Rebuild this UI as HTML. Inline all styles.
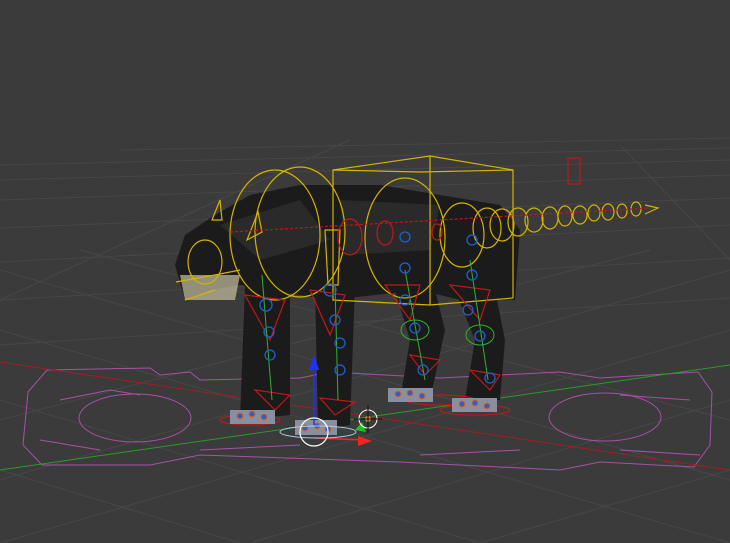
<!DOCTYPE html><html><head><style>html,body{margin:0;padding:0;background:#3b3b3b;width:730px;height:543px;overflow:hidden}</style></head><body>
<svg width="730" height="543" viewBox="0 0 730 543" xmlns="http://www.w3.org/2000/svg">
<rect width="730" height="543" fill="#3b3b3b"/>
<g stroke="#474747" stroke-width="1" fill="none">
<path d="M0 200 L730 175"/><path d="M0 228 L730 198"/><path d="M0 262 L730 225"/><path d="M0 300 L730 258"/><path d="M0 345 L730 298"/>
<path d="M0 180 L730 160"/><path d="M0 165 L730 148"/><path d="M120 150 L730 138"/>
<path d="M0 330 L730 543"/><path d="M0 400 L480 543"/><path d="M0 470 L240 543"/><path d="M0 270 L730 480"/><path d="M80 250 L730 420"/>
<path d="M730 330 L0 543"/><path d="M730 400 L250 543"/><path d="M730 470 L480 543"/><path d="M730 270 L0 480"/><path d="M650 250 L0 420"/>
<path d="M0 300 L350 140"/><path d="M620 145 L730 260"/>
</g>
<!-- pink ground -->
<g stroke="#a850a8" stroke-width="1" fill="none">
<path d="M47 370 L150 368 L160 375 L190 372 L200 380 L300 378 L330 372 L440 378 L560 372 L600 378 L698 372 L712 392 L710 445 L694 467 L600 462 L560 470 L400 462 L200 455 L150 465 L42 465 L23 445 L28 392 Z"/>
<path d="M60 400 L110 390 L140 395 M620 395 L690 400 M40 440 L100 450 M620 450 L700 455 M200 450 L300 445 M420 455 L520 450"/>
<ellipse cx="135" cy="418" rx="56" ry="24"/><ellipse cx="605" cy="417" rx="56" ry="24"/>
</g>
<path d="M0 470 L730 365" stroke="#2a9a2a" stroke-width="1"/>
<path d="M0 362 L730 470" stroke="#a02020" stroke-width="1" fill="none"/>
<!-- body -->
<g fill="#1b1b1b">
<path d="M175 265 L185 235 L215 215 L250 195 L300 185 L380 185 L440 195 L500 205 L520 230 L515 300 L460 300 L420 290 L330 300 L240 285 L210 290 L185 300 Z"/>
<path d="M245 285 L290 280 L290 415 L240 420 Z"/>
<path d="M315 285 L355 285 L350 425 L318 430 Z"/>
<path d="M395 290 L435 290 L445 330 L430 400 L400 400 L410 340 Z"/>
<path d="M455 290 L495 290 L505 340 L500 400 L465 400 L475 340 Z"/>
</g>
<g fill="#2a2a2a"><path d="M220 225 L300 200 L330 240 L260 260 Z"/><path d="M340 200 L440 205 L430 250 L345 255 Z"/></g>
<path d="M180 275 L240 275 L235 300 L205 300 L185 300 Z" fill="#c8c0a0" opacity=".7"/>
<!-- yellow rig -->
<g stroke="#d4b400" stroke-width="1.2" fill="none">
<path d="M333 170 L430 156 L513 170 L513 298 L430 305 L333 300 Z M333 170 L333 300 M430 156 L430 305 M333 170 L420 172 L513 170"/>
<ellipse cx="275" cy="235" rx="45" ry="65"/><ellipse cx="300" cy="232" rx="45" ry="65"/>
<ellipse cx="405" cy="238" rx="40" ry="60"/><ellipse cx="462" cy="235" rx="22" ry="32"/>
<ellipse cx="487" cy="228" rx="14" ry="20"/><ellipse cx="502" cy="225" rx="12" ry="16"/><ellipse cx="518" cy="222" rx="10" ry="14"/><ellipse cx="534" cy="220" rx="9" ry="12"/><ellipse cx="550" cy="218" rx="8" ry="11"/><ellipse cx="565" cy="216" rx="7" ry="10"/><ellipse cx="580" cy="215" rx="7" ry="9"/><ellipse cx="594" cy="213" rx="6" ry="8"/><ellipse cx="608" cy="212" rx="6" ry="8"/><ellipse cx="622" cy="211" rx="5" ry="7"/><ellipse cx="636" cy="209" rx="5" ry="7"/><path d="M645 205 L658 208 L645 214"/>
<ellipse cx="205" cy="262" rx="17" ry="22"/><path d="M176 282 L215 275 L240 270 M185 300 L215 290"/>
<path d="M212 220 L220 200 L222 220 Z M247 240 L258 212 L262 232 Z"/>
<path d="M325 230 L340 230 L338 285 L328 285 Z"/>
</g>
<!-- red -->
<g stroke="#c01818" stroke-width="1.2" fill="none">
<path d="M230 232 L650 208" stroke-dasharray="3 2"/>
<ellipse cx="350" cy="237" rx="12" ry="18"/><ellipse cx="385" cy="233" rx="8" ry="12"/><ellipse cx="437" cy="232" rx="5" ry="8"/>
<path d="M245 295 L285 300 L270 340 Z M310 290 L345 295 L330 335 Z M385 285 L420 285 L410 320 Z M450 285 L490 290 L480 320 Z"/>
<path d="M255 390 L290 395 L275 410 Z M320 398 L355 402 L335 415 Z M410 355 L440 360 L425 375 Z M470 370 L500 375 L490 390 Z"/>
<ellipse cx="250" cy="420" rx="30" ry="5"/><ellipse cx="440" cy="400" rx="35" ry="5"/><ellipse cx="475" cy="410" rx="35" ry="5"/>
<rect x="568" y="158" width="12" height="26"/>
</g>
<!-- green/blue -->
<g stroke="#30b030" stroke-width="1" fill="none"><path d="M262 275 L272 400 M335 285 L338 400 M405 270 L425 380 M470 260 L488 380"/><ellipse cx="415" cy="330" rx="14" ry="10"/><ellipse cx="480" cy="335" rx="14" ry="10"/></g>
<g stroke="#2060d0" stroke-width="1.3" fill="none">
<circle cx="266" cy="305" r="6"/><circle cx="269" cy="332" r="5"/><circle cx="270" cy="355" r="5"/><circle cx="330" cy="290" r="6"/><circle cx="335" cy="320" r="5"/><circle cx="340" cy="343" r="5"/><circle cx="340" cy="370" r="5"/><circle cx="405" cy="237" r="5"/><circle cx="405" cy="268" r="5"/><circle cx="405" cy="300" r="5"/><circle cx="415" cy="328" r="5"/><circle cx="423" cy="370" r="5"/><circle cx="472" cy="240" r="5"/><circle cx="472" cy="275" r="5"/><circle cx="468" cy="310" r="5"/><circle cx="480" cy="336" r="5"/><circle cx="490" cy="378" r="5"/>
</g>
<!-- feet -->
<g><rect x="230" y="410" width="45" height="14" fill="#8890a0"/><rect x="295" y="420" width="42" height="15" fill="#8890a0"/><rect x="388" y="388" width="45" height="14" fill="#8890a0"/><rect x="452" y="398" width="45" height="14" fill="#8890a0"/>
<g fill="#3060c0" stroke="#e06020" stroke-width="1"><circle cx="240" cy="416" r="3"/><circle cx="252" cy="414" r="3"/><circle cx="264" cy="417" r="3"/><circle cx="305" cy="428" r="3"/><circle cx="317" cy="426" r="3"/><circle cx="328" cy="429" r="3"/><circle cx="398" cy="394" r="3"/><circle cx="410" cy="393" r="3"/><circle cx="422" cy="396" r="3"/><circle cx="462" cy="404" r="3"/><circle cx="475" cy="403" r="3"/><circle cx="487" cy="406" r="3"/></g></g>
<!-- gizmo -->
<path d="M314 425 L314 362" stroke="#2030ff" stroke-width="1.5"/><path d="M309 370 L314 355 L319 370 Z" fill="#2030ff"/>
<path d="M314 438 L365 440" stroke="#ff2020" stroke-width="1.5"/><path d="M358 436 L372 441 L358 446 Z" fill="#ff2020"/>
<path d="M355 430 L362 422 L366 432 Z" fill="#20c020"/>
<ellipse cx="318" cy="432" rx="38" ry="6" stroke="#a0d0e0" fill="none"/>
<circle cx="314" cy="432" r="14" stroke="#fff" fill="none" stroke-width="1.2"/>
<circle cx="368" cy="419" r="9" stroke="#fff" fill="none"/><circle cx="368" cy="419" r="3" fill="#d09040"/>
<path d="M368 405 L368 433 M354 419 L382 419" stroke="#111" stroke-width="1"/>
</svg>
</body></html>
